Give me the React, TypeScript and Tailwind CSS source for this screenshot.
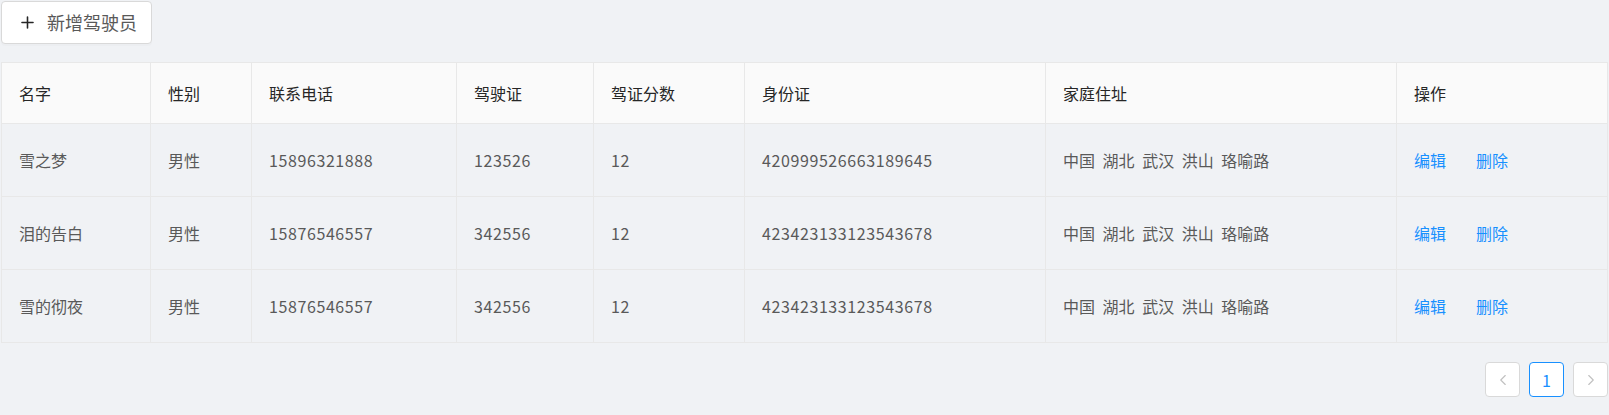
import { Plus, ChevronLeft, ChevronRight } from 'lucide-react';

type Driver = {
  name: string;
  gender: string;
  phone: string;
  license: string;
  score: string;
  idCard: string;
  address: string;
};

const drivers: Driver[] = [
  { name: '雪之梦', gender: '男性', phone: '15896321888', license: '123526', score: '12', idCard: '420999526663189645', address: '中国 湖北 武汉 洪山 珞喻路' },
  { name: '泪的告白', gender: '男性', phone: '15876546557', license: '342556', score: '12', idCard: '423423133123543678', address: '中国 湖北 武汉 洪山 珞喻路' },
  { name: '雪的彻夜', gender: '男性', phone: '15876546557', license: '342556', score: '12', idCard: '423423133123543678', address: '中国 湖北 武汉 洪山 珞喻路' },
];

const cols = [
  { title: '名字', w: 'w-[149px]' },
  { title: '性别', w: 'w-[101px]' },
  { title: '联系电话', w: 'w-[205px]' },
  { title: '驾驶证', w: 'w-[137px]' },
  { title: '驾证分数', w: 'w-[151px]' },
  { title: '身份证', w: 'w-[301px]' },
  { title: '家庭住址', w: 'w-[351px]' },
  { title: '操作', w: 'w-[211px]' },
];

export default function App() {
  const font = { fontFamily: '"Noto Sans CJK SC", "Noto Sans", sans-serif' };
  return (
    <div className="min-h-[415px] bg-[#f0f2f5] px-[1px] pt-[1px]" style={font}>
      <button className="flex h-[43px] w-[151px] items-center gap-[10px] rounded-[4px] border border-[#d9d9d9] bg-white pl-[16px] text-[18px] text-[#595959] shadow-[0_2px_0_rgba(0,0,0,0.015)]">
        <Plus className="h-[19px] w-[19px] text-[#262626]" strokeWidth={2} />
        <span>新增驾驶员</span>
      </button>

      <table className="mt-[18px] w-full table-fixed border-collapse border border-[#e8e8e8] text-[16px]">
        <thead>
          <tr className="h-[61px] bg-[#fafafa]">
            {cols.map(c => (
              <th key={c.title} className={`${c.w} border border-[#e8e8e8] px-[17px] text-left font-normal text-[#262626]`}>{c.title}</th>
            ))}
          </tr>
        </thead>
        <tbody className="text-[#595959]">
          {drivers.map(d => (
            <tr key={d.name} className="h-[73px]">
              <td className="border border-[#e8e8e8] px-[17px]">{d.name}</td>
              <td className="border border-[#e8e8e8] px-[17px]">{d.gender}</td>
              <td className="border border-[#e8e8e8] px-[17px] tracking-[0.6px]">{d.phone}</td>
              <td className="border border-[#e8e8e8] px-[17px] tracking-[0.6px]">{d.license}</td>
              <td className="border border-[#e8e8e8] px-[17px] tracking-[0.6px]">{d.score}</td>
              <td className="border border-[#e8e8e8] px-[17px] tracking-[0.6px]">{d.idCard}</td>
              <td className="border border-[#e8e8e8] px-[17px] [word-spacing:4px]">{d.address}</td>
              <td className="border border-[#e8e8e8] px-[17px]">
                <span className="mr-[30px] text-[#1890ff]">编辑</span>
                <span className="text-[#1890ff]">删除</span>
              </td>
            </tr>
          ))}
        </tbody>
      </table>

      <div className="mt-[19px] flex justify-end gap-[9px]">
        <div className="flex h-[35px] w-[35px] items-center justify-center rounded-[4px] border border-[#d9d9d9] bg-white text-[#c0c0c0]">
          <ChevronLeft className="h-[18px] w-[18px]" strokeWidth={1.5} />
        </div>
        <div className="flex h-[35px] w-[35px] items-center justify-center rounded-[4px] border border-[#1890ff] bg-white text-[16px] text-[#1890ff]">1</div>
        <div className="flex h-[35px] w-[35px] items-center justify-center rounded-[4px] border border-[#d9d9d9] bg-white text-[#c0c0c0]">
          <ChevronRight className="h-[18px] w-[18px]" strokeWidth={1.5} />
        </div>
      </div>
    </div>
  );
}
